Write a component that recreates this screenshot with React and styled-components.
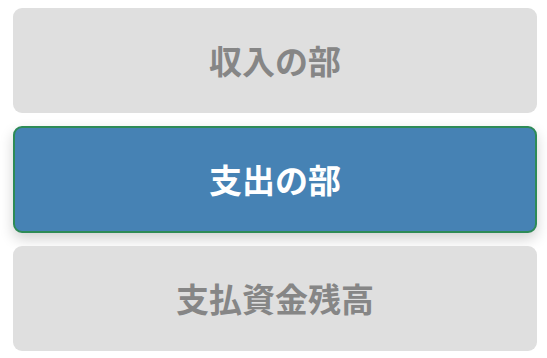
import React, { useState } from 'react';
import styled, { createGlobalStyle } from 'styled-components';

const GlobalStyle = createGlobalStyle`
  body {
    margin: 0;
    background: #ffffff;
    font-family: "Noto Sans CJK JP", "Noto Sans", sans-serif;
  }
`;

const Menu = styled.nav`
  display: flex;
  flex-direction: column;
  gap: 13.5px;
  padding: 8px 10px 8px 13px;
`;

const MenuButton = styled.button`
  display: flex;
  align-items: center;
  justify-content: center;
  flex-shrink: 0;
  height: ${(props) => (props.active ? '106.5px' : '104.5px')};
  width: 100%;
  border-radius: 9px;
  border: ${(props) => (props.active ? '2px solid #2e8b57' : 'none')};
  background: ${(props) => (props.active ? '#4682b4' : '#dfdfdf')};
  color: ${(props) => (props.active ? '#ffffff' : '#868686')};
  box-shadow: ${(props) =>
    props.active ? '0 6px 14px rgba(0, 0, 0, 0.18)' : 'none'};
  font-family: "Noto Sans CJK JP", "Noto Sans", sans-serif;
  font-size: 33px;
  font-weight: 700;
  cursor: pointer;
  outline: none;
`;

const items = ['収入の部', '支出の部', '支払資金残高'];

const App = () => {
  const [selected, setSelected] = useState(1);

  return (
    <>
      <GlobalStyle />
      <Menu>
        {items.map((label, i) => (
          <MenuButton
            key={label}
            active={selected === i}
            onClick={() => setSelected(i)}
          >
            {label}
          </MenuButton>
        ))}
      </Menu>
    </>
  );
};

export default App;
